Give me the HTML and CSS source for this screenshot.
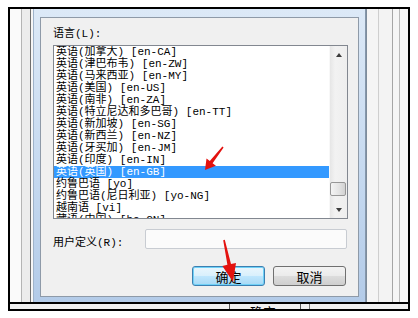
FILE: index.html
```html
<!DOCTYPE html>
<html lang="zh-CN">
<head>
    <meta charset="UTF-8">
    <title>语言</title>
    <link rel="stylesheet" href="styles.css">
</head>
<body>
    <div class="screen">
        <div class="desk">
            <div class="edge-left"></div>
            <div class="dialog">
                <div class="panel">
                    <div class="field-label">语言(L):</div>
                    <div class="listbox">
                        <ul class="items">
                            <li>英语(加拿大) [en-CA]</li>
                            <li>英语(津巴布韦) [en-ZW]</li>
                            <li>英语(马来西亚) [en-MY]</li>
                            <li>英语(美国) [en-US]</li>
                            <li>英语(南非) [en-ZA]</li>
                            <li>英语(特立尼达和多巴哥) [en-TT]</li>
                            <li>英语(新加坡) [en-SG]</li>
                            <li>英语(新西兰) [en-NZ]</li>
                            <li>英语(牙买加) [en-JM]</li>
                            <li>英语(印度) [en-IN]</li>
                            <li class="selected">英语(英国) [en-GB]</li>
                            <li>约鲁巴语 [yo]</li>
                            <li>约鲁巴语(尼日利亚) [yo-NG]</li>
                            <li>越南语 [vi]</li>
                            <li>藏语(中国) [bo-CN]</li>
                        </ul>
                        <div class="scrollbar">
                            <div class="sb-btn"><span class="tri-up"></span></div>
                            <div class="sb-track"><div class="sb-thumb"></div></div>
                            <div class="sb-btn"><span class="tri-down"></span></div>
                        </div>
                    </div>
                    <div class="custom-row">
                        <span class="custom-label">用户定义(R):</span>
                        <div class="textbox"></div>
                    </div>
                    <div class="buttons">
                        <button class="btn btn-default">确定</button>
                        <button class="btn">取消</button>
                    </div>
                </div>
            </div>
            <div class="edge-right"></div>
        </div>
        <div class="taskrow"><span class="task-text">确定</span></div>
    </div>

    <!-- red markers drawn over the screenshot -->
    <svg class="arrows" width="418" height="318" viewBox="0 0 418 318">
        <polygon points="222.4,146.6 223.6,147.4 212.6,163.2 215.9,165.8 205,170 206.5,158.4 209.8,161" fill="#e3120f"/>
        <polygon points="223.2,240.2 224.8,239.8 231,264 236,262.9 233,282 222.4,265.9 227.4,264.8" fill="#e3120f"/>
    </svg>
</body>
</html>
```

FILE: styles.css
```css
body {
    margin: 0;
    padding: 7px 0 0 8px;
    height: 318px;
    box-sizing: border-box;
    background: #fff;
    position: relative;
    overflow: hidden;
    font-family: "Liberation Mono", "Noto Sans CJK SC", monospace;
    font-size: 11px;
    color: #000;
}

.screen {
    width: 402px;
    height: 304px;
    box-sizing: border-box;
    border: 2px solid #000;
    background: #f2f2f2;
}

.desk {
    display: flex;
    height: 293px;
}

/* strips of the windows behind the dialog */
.edge-left {
    width: 23px;
    background: linear-gradient(to right, #fafafa 0 11px, #b4b4b4 11px 12px, #ececec 12px 20px, #6f6f6f 20px 21px, #f6f6f6 21px);
}

.edge-right {
    flex: 1;
    background: linear-gradient(to right, #7d8c9c 0 1px, #f5f5f5 1px 12px, #cfcfcf 12px 13px, #f3f3f3 13px 26px, #a5a5a5 26px 27px, #f5f5f5 27px 33px, #b8b8b8 33px 34px, #f7f7f7 34px);
}

/* Dialog frame */
.dialog {
    width: 333px;
    box-sizing: border-box;
    padding: 8px 7px 5px;
    background: linear-gradient(#dce9f7, #c4d8ef 60%, #b3cbe8);
    border-left: 1px solid #9fb3ca;
    border-right: 1px solid #8597ab;
}

.panel {
    height: 280px;
    box-sizing: border-box;
    border: 1px solid #8e9aa8;
    background: #f0f0f0;
    padding: 9px 10px 0 12px;
    margin-left: -1px;
    margin-right: -1px;
}

.field-label {
    height: 14px;
    line-height: 14px;
    margin-bottom: 4px;
}

/* Language list */
.listbox {
    display: flex;
    height: 174px;
    box-sizing: border-box;
    border: 1px solid #828790;
    background: #fff;
}

.items {
    flex: 1;
    margin: 0;
    padding: 0;
    list-style: none;
    overflow: hidden;
}

.items li {
    height: 12px;
    line-height: 12px;
    padding-left: 2px;
    white-space: nowrap;
}

.items li.selected {
    background: #3399ff;
    color: #fff;
}

.scrollbar {
    width: 17px;
    display: flex;
    flex-direction: column;
    background: linear-gradient(to right, #e6e6e6, #f2f2f2 30%, #eeeeee);
    border-left: 1px solid #f8f8f8;
}

.sb-btn {
    height: 17px;
    display: flex;
    align-items: center;
    justify-content: center;
}

.tri-up {
    width: 0;
    height: 0;
    border-left: 3.5px solid transparent;
    border-right: 3.5px solid transparent;
    border-bottom: 4px solid #3c3c3c;
}

.tri-down {
    width: 0;
    height: 0;
    border-left: 3.5px solid transparent;
    border-right: 3.5px solid transparent;
    border-top: 4px solid #3c3c3c;
}

.sb-track {
    flex: 1;
}

.sb-thumb {
    margin: 119px 1px 0 0;
    height: 14px;
    box-sizing: border-box;
    border: 1px solid #979797;
    border-radius: 2px;
    background: linear-gradient(to right, #f4f4f4, #e4e4e4 55%, #d2d2d2);
}

/* Custom locale */
.custom-row {
    display: flex;
    align-items: center;
    margin-top: 10px;
    height: 20px;
}

.custom-label {
    width: 92px;
    padding-top: 4px;
}

.textbox {
    width: 202px;
    height: 20px;
    box-sizing: border-box;
    border: 1px solid #c8ccd2;
    border-radius: 2px;
    background: #fbfbfb;
}

/* Buttons */
.buttons {
    display: flex;
    justify-content: flex-end;
    gap: 8px;
    margin-top: 17px;
    padding-right: 2px;
}

.btn {
    width: 73px;
    height: 20px;
    padding: 0;
    box-sizing: border-box;
    border: 1px solid #707070;
    border-radius: 3px;
    background: linear-gradient(#f3f3f3, #ebebeb 48%, #dcdcdc 52%, #cfcfcf);
    font-family: "Noto Sans CJK SC", sans-serif;
    font-size: 13px;
    line-height: 17px;
    color: #000;
}

.btn-default {
    border-color: #3c7fb1;
    box-shadow: inset 0 0 0 1px #6fd1f7;
    background: linear-gradient(#eaf6fd, #d9f0fc 48%, #bee6fd 52%, #a7d9f5);
}

/* Row of the window behind */
.taskrow {
    height: 7px;
    box-sizing: border-box;
    border-top: 2px solid #000;
    overflow: hidden;
    padding-left: 240px;
    background: linear-gradient(to right, #f0f0f0 0 219px, #555 219px 220px, #f0f0f0 220px 290px, #555 290px 291px, #f0f0f0 291px 299px, #777 299px 300px, #f0f0f0 300px);
}

.task-text {
    display: block;
    font-family: "Noto Sans CJK SC", sans-serif;
    font-size: 13px;
    line-height: 13px;
    margin-top: 1px;
}

.arrows {
    position: absolute;
    left: 0;
    top: 0;
    pointer-events: none;
}
```
